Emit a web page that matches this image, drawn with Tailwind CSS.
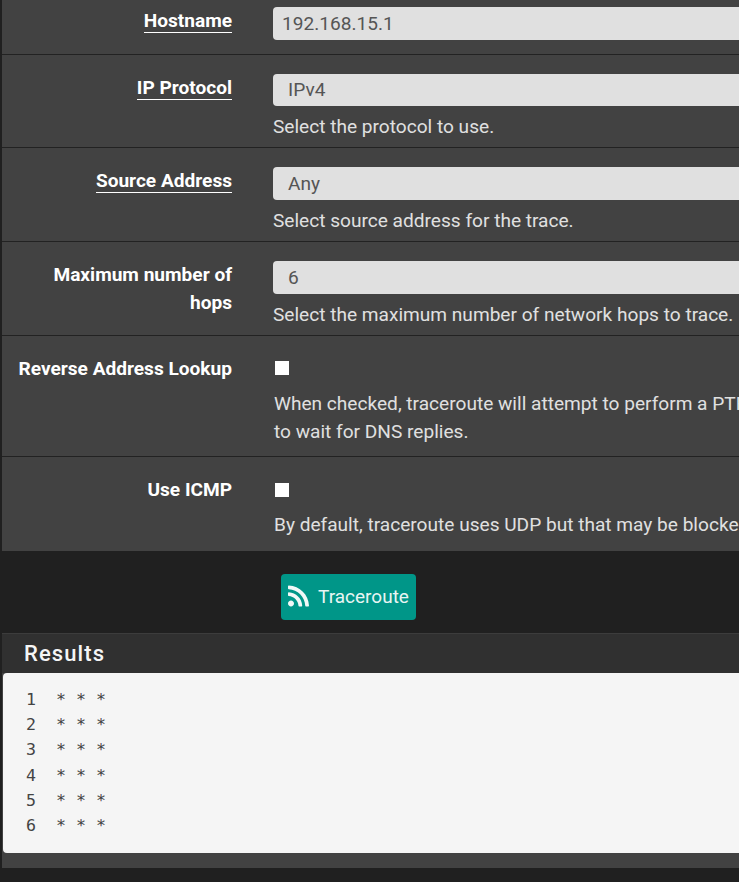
<!doctype html>
<html>
<head>
<meta charset="utf-8">
<script src="https://cdn.jsdelivr.net/npm/@tailwindcss/browser@4"></script>
</head>
<body class="bg-[#202020] overflow-hidden font-['Roboto',sans-serif]">
<div class="w-[739px] h-[882px] overflow-hidden pl-[2px]">
  <div class="w-[900px] h-[551px] bg-[#424242] text-[19.1px] text-[#e0e0e0]">
    <div class="flex h-[55px] border-b border-[#222] pt-[7px]">
      <div class="w-[230px] shrink-0 text-right text-white font-bold leading-[27px]"><span class="border-b border-white">Hostname</span></div>
      <div class="ml-[41px] flex-1"><div class="h-[33px] rounded-[4px] bg-[#e0e0e0] text-[#555] pl-[9px] leading-[34px]">192.168.15.1</div></div>
    </div>
    <div class="flex h-[93px] border-b border-[#222] pt-[19px]">
      <div class="w-[230px] shrink-0 text-right text-white font-bold leading-[27px]"><span class="border-b border-white">IP Protocol</span></div>
      <div class="ml-[41px] flex-1"><div class="h-[32px] rounded-[4px] bg-[#e0e0e0] text-[#555] pl-[15px] leading-[31px]">IPv4</div><div class="mt-[7px] leading-[28px] whitespace-nowrap">Select the protocol to use.</div></div>
    </div>
    <div class="flex h-[94px] border-b border-[#222] pt-[19px]">
      <div class="w-[230px] shrink-0 text-right text-white font-bold leading-[27px]"><span class="border-b border-white">Source Address</span></div>
      <div class="ml-[41px] flex-1"><div class="h-[33px] rounded-[4px] bg-[#e0e0e0] text-[#555] pl-[15px] leading-[33px]">Any</div><div class="mt-[7px] leading-[28px] whitespace-nowrap">Select source address for the trace.</div></div>
    </div>
    <div class="flex h-[94px] border-b border-[#222] pt-[19px]">
      <div class="w-[230px] shrink-0 text-right text-white font-bold leading-[28px]">Maximum number of<br>hops</div>
      <div class="ml-[41px] flex-1"><div class="h-[33px] rounded-[4px] bg-[#e0e0e0] text-[#555] pl-[15px] leading-[33px]">6</div><div class="mt-[7px] leading-[28px] whitespace-nowrap">Select the maximum number of network hops to trace.</div></div>
    </div>
    <div class="flex h-[121px] border-b border-[#222] pt-[19px]">
      <div class="w-[230px] shrink-0 text-right text-white font-bold leading-[27px]">Reverse Address Lookup</div>
      <div class="ml-[42px] flex-1">
        <div class="h-[28px] pt-[6px]"><div class="ml-[1px] w-[14px] h-[14px] bg-white"></div></div>
        <div class="mt-[7px] leading-[28px] whitespace-nowrap">When checked, traceroute will attempt to perform a PTR lookup to locate hostnames<br>to wait for DNS replies.</div>
      </div>
    </div>
    <div class="flex h-[94px] pt-[19px]">
      <div class="w-[230px] shrink-0 text-right text-white font-bold leading-[27px]">Use ICMP</div>
      <div class="ml-[42px] flex-1">
        <div class="h-[28px] pt-[7px]"><div class="ml-[1px] w-[14px] h-[14px] bg-white"></div></div>
        <div class="mt-[7px] leading-[28px] whitespace-nowrap">By default, traceroute uses UDP but that may be blocked by some routers.</div>
      </div>
    </div>
  </div>
  <div class="h-[82px] pt-[23px] pl-[279px]">
    <button class="flex items-center w-[135px] h-[46px] rounded-[4px] bg-[#009688] text-[#e8f5f3] text-[19px] pl-[7px]">
      <svg class="w-[21px] h-[24px] fill-[#f1f8f7] -translate-y-px" viewBox="0 0 448 512"><path d="M128.081 415.959c0 35.369-28.672 64.041-64.041 64.041S0 451.328 0 415.959s28.672-64.041 64.041-64.041 64.04 28.672 64.04 64.041zm175.66 47.25c-8.354-154.6-132.185-278.587-286.95-286.95C7.656 175.765 0 183.105 0 192.253v48.069c0 8.415 6.49 15.472 14.887 16.018 111.832 7.284 201.473 96.702 208.772 208.772.547 8.397 7.604 14.887 16.018 14.887h48.069c9.149.001 16.489-7.655 15.995-16.79zm144.249.288C439.596 229.677 251.465 40.445 16.503 32.01 7.473 31.686 0 38.981 0 48.016v48.068c0 8.625 6.835 15.645 15.453 15.999 191.179 7.839 344.627 161.316 352.465 352.465.353 8.618 7.373 15.453 15.999 15.453h48.068c9.034-.001 16.329-7.474 16.005-16.504z"/></svg>
      <span class="ml-[9px]">Traceroute</span>
    </button>
  </div>
  <div class="w-[900px] h-[235px] bg-[#424242]">
    <div class="h-[40px] bg-[#303030] border-t border-[#3c3c3c] pl-[22px] text-[#f5f5f5] text-[22px] font-medium tracking-[1.1px] leading-[39px]">Results</div>
    <div class="ml-[1px] h-[180px] bg-[#f5f5f5] rounded-tl-[4px] rounded-bl-[4px] pt-[14px] pl-[23px] font-['DejaVu_Sans_Mono',monospace] text-[16.6px] leading-[25.2px] text-[#444] whitespace-pre">1  * * *
2  * * *
3  * * *
4  * * *
5  * * *
6  * * *</div>
  </div>
</div>
</body>
</html>
